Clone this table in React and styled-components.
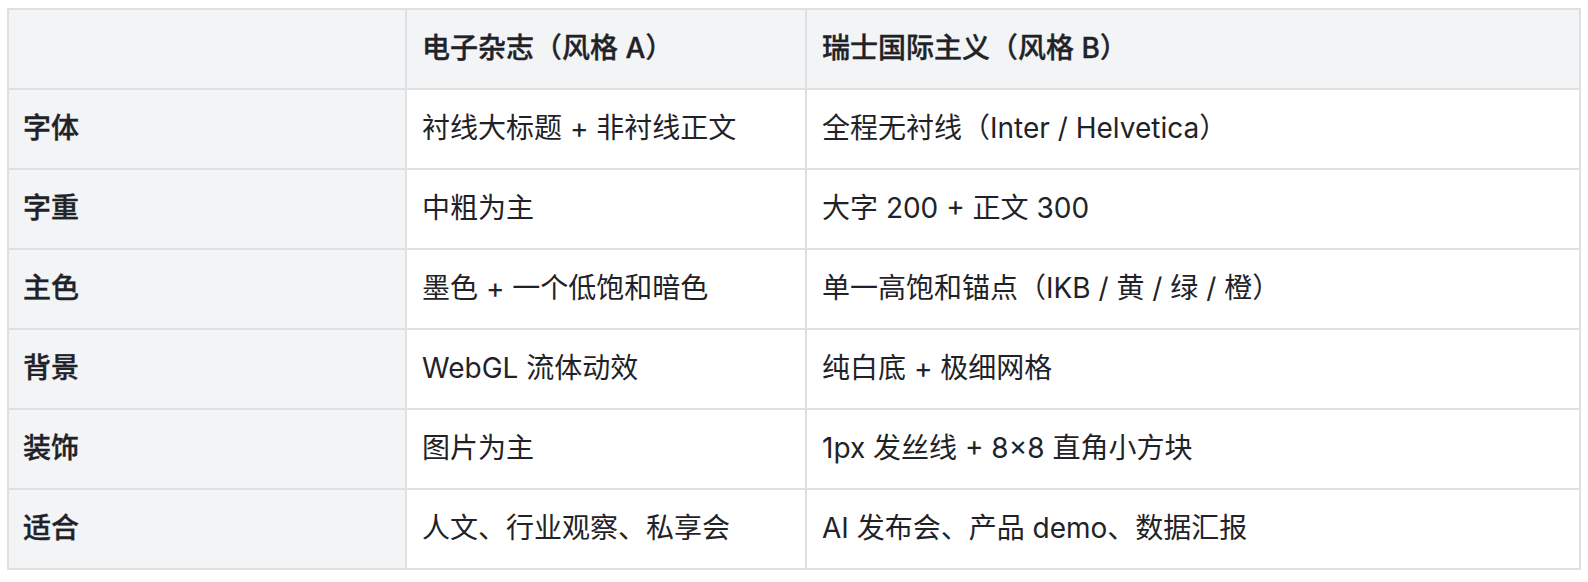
import React from "react";
import styled, { createGlobalStyle } from "styled-components";

const Global = createGlobalStyle`
  html, body { background: #ffffff; }
  body {
    margin: 8px 7px;
    font-family: "Inter", "Noto Sans CJK SC", "Noto Sans", sans-serif;
    color: #1f2328;
  }
`;

const Table = styled.table`
  table-layout: fixed;
  width: 1574px;
  border-collapse: separate;
  border-spacing: 0;
  border-top: 2px solid #dfe0e2;
  border-left: 2px solid #dfe0e2;
  font-size: 28px;
`;

const Cell = styled.td`
  box-sizing: border-box;
  height: 80px;
  padding: 0 16px;
  border-right: 2px solid #dfe0e2;
  border-bottom: 2px solid #dfe0e2;
  vertical-align: middle;
  text-align: left;
  white-space: nowrap;
  line-height: 1.4;
  font-weight: ${(p) => (p.$strong ? 500 : 400)};
  -webkit-text-stroke: ${(p) => (p.$strong ? "0.35px currentColor" : "0")};
  background: ${(p) => (p.$shaded ? "#f3f4f6" : "#ffffff")};
  padding-left: ${(p) => (p.$first ? "14px" : "15px")};
`;

const HeadCell = styled(Cell).attrs({ as: "th" })``;

const rows = [
  ["字体", "衬线大标题 + 非衬线正文", "全程无衬线（Inter / Helvetica）"],
  ["字重", "中粗为主", "大字 200 + 正文 300"],
  ["主色", "墨色 + 一个低饱和暗色", "单一高饱和锚点（IKB / 黄 / 绿 / 橙）"],
  ["背景", "WebGL 流体动效", "纯白底 + 极细网格"],
  ["装饰", "图片为主", "1px 发丝线 + 8×8 直角小方块"],
  ["适合", "人文、行业观察、私享会", "AI 发布会、产品 demo、数据汇报"],
];

export default function App() {
  return (
    <>
      <Global />
      <Table>
        <colgroup>
          <col style={{ width: 398 }} />
          <col style={{ width: 400 }} />
          <col style={{ width: 774 }} />
        </colgroup>
        <thead>
          <tr>
            <HeadCell $shaded $strong $first></HeadCell>
            <HeadCell $shaded $strong>电子杂志（风格 A）</HeadCell>
            <HeadCell $shaded $strong>瑞士国际主义（风格 B）</HeadCell>
          </tr>
        </thead>
        <tbody>
          {rows.map((r) => (
            <tr key={r[0]}>
              <Cell $shaded $strong $first>{r[0]}</Cell>
              <Cell>{r[1]}</Cell>
              <Cell>{r[2]}</Cell>
            </tr>
          ))}
        </tbody>
      </Table>
    </>
  );
}
